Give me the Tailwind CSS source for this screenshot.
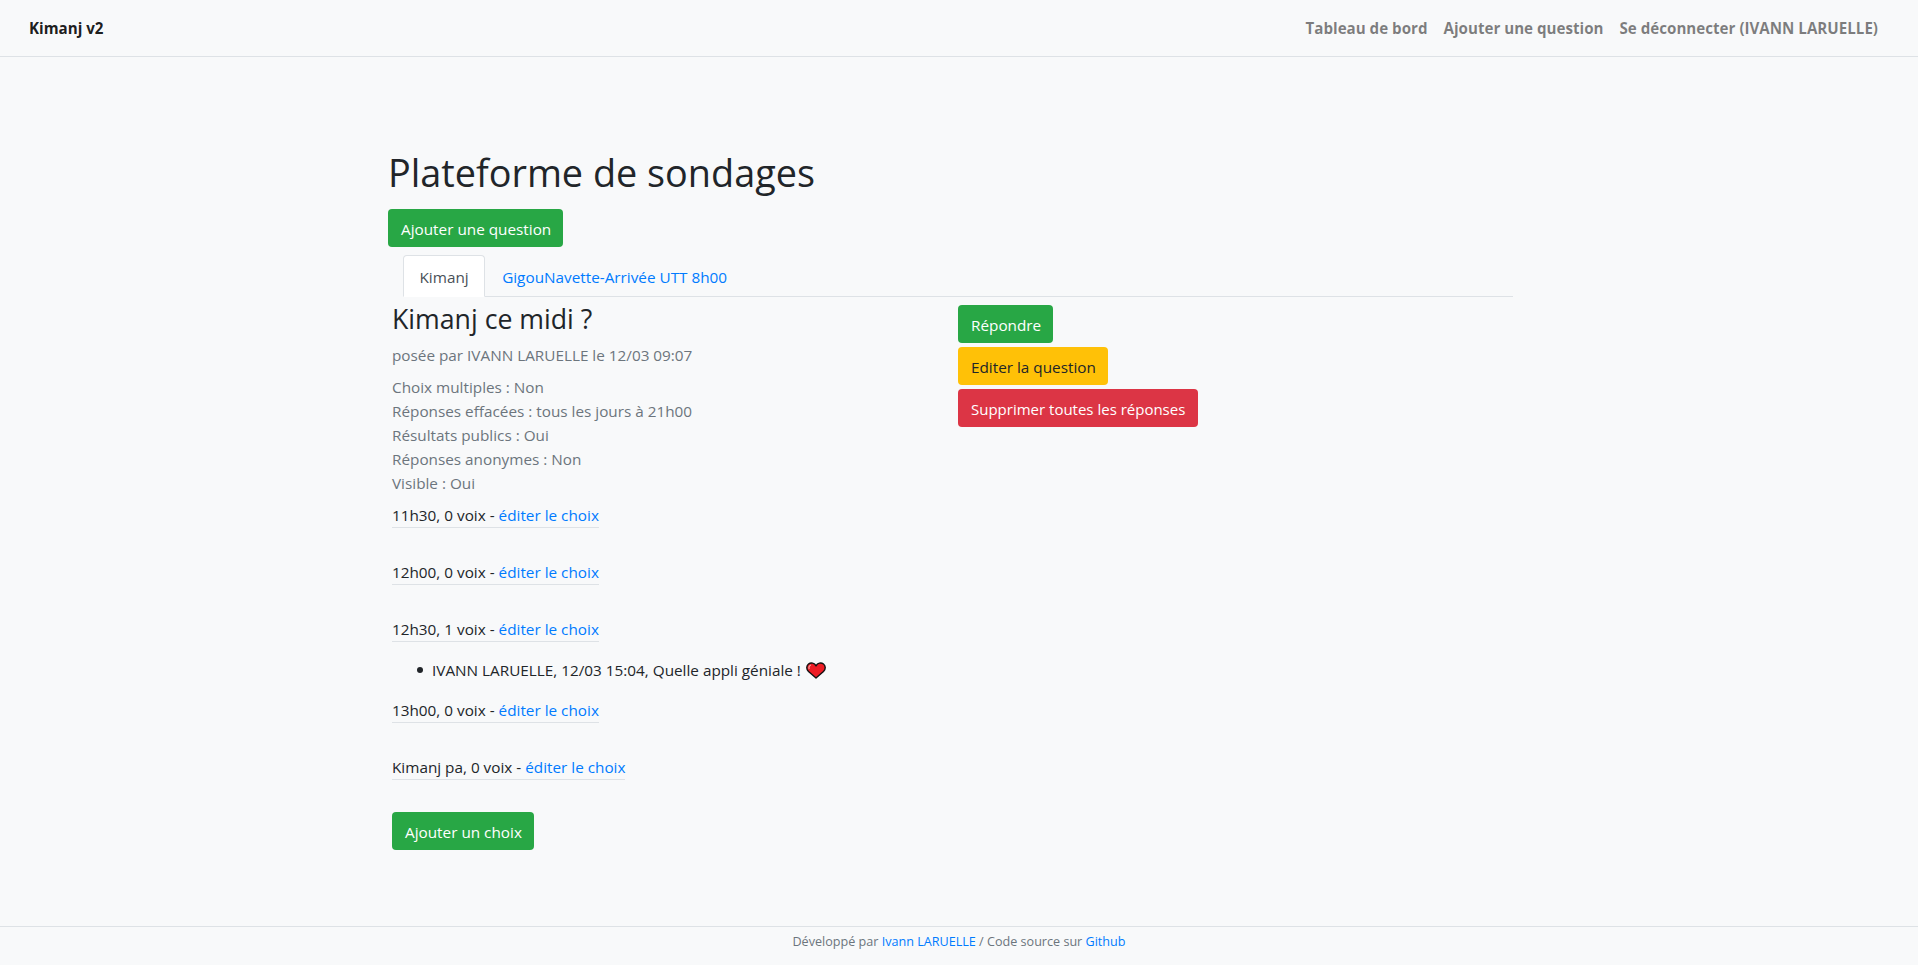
<!DOCTYPE html>
<html lang="fr">

<head>
    <meta charset="UTF-8">
    <meta name="viewport" content="width=device-width, initial-scale=1.0">
    <title>Kimanj v2</title>
    <script src="https://cdn.jsdelivr.net/npm/@tailwindcss/browser@4"></script>
</head>

<body class="bg-[#f8f9fa] text-[#212529] font-['Open_Sans',sans-serif] text-[15.3px] leading-6 min-h-screen flex flex-col">
    <nav class="h-[57px] border-b border-[#dee2e6] flex items-center justify-between pl-[29px] pr-10 font-bold text-[15.15px]">
        <a href="#" class="text-black/90">Kimanj v2</a>
        <div class="flex gap-4 text-black/50">
            <a href="#">Tableau de bord</a>
            <a href="#">Ajouter une question</a>
            <a href="#">Se déconnecter (IVANN LARUELLE)</a>
        </div>
    </nav>

    <main class="flex-1 w-[1142px] mx-auto pt-24">
        <h1 class="text-[37.8px] leading-[39px] mb-[17px]">Plateforme de sondages</h1>
        <a href="#" class="inline-block bg-[#28a745] text-white rounded pl-[13px] pr-3 pt-2 pb-[6px]">Ajouter une question</a>

        <ul class="flex mt-2 ml-[15px] mr-[17px] border-b border-[#dee2e6]">
            <li class="-mb-px"><a href="#" class="block px-[15.5px] pt-[9px] pb-[7px] text-[#495057] bg-white border border-[#dee2e6] border-b-white rounded-t">Kimanj</a></li>
            <li class="-mb-px"><a href="#" class="block px-4 pt-[9px] pb-[7px] text-[#007bff] border border-transparent">GigouNavette-Arrivée UTT 8h00</a></li>
        </ul>

        <div class="flex pl-1">
            <section class="w-[566px]">
                <h3 class="text-[26.7px] leading-[34px] mt-[5px] mb-[7px]">Kimanj ce midi ?</h3>
                <p class="text-[#6c757d] mb-2">posée par IVANN LARUELLE le 12/03 09:07</p>
                <p class="text-[#6c757d] mb-2">
                    Choix multiples : Non<br>
                    Réponses effacées : tous les jours à 21h00<br>
                    Résultats publics : Oui<br>
                    Réponses anonymes : Non<br>
                    Visible : Oui
                </p>

                <div class="mb-8"><span class="inline-block border-b border-[#dee2e6] leading-[24px]">11h30, 0 voix - <a href="#" class="text-[#007bff]">éditer le choix</a></span></div>
                <div class="mb-8"><span class="inline-block border-b border-[#dee2e6] leading-[24px]">12h00, 0 voix - <a href="#" class="text-[#007bff]">éditer le choix</a></span></div>
                <div><span class="inline-block border-b border-[#dee2e6] leading-[24px]">12h30, 1 voix - <a href="#" class="text-[#007bff]">éditer le choix</a></span></div>
                <ul class="pl-10 my-4">
                    <li class="relative before:absolute before:left-[-15px] before:top-[9px] before:size-[6px] before:rounded-full before:bg-[#212529]">
                        IVANN LARUELLE, 12/03 15:04, Quelle appli géniale !
                        <svg class="inline-block align-[-3px] ml-px" width="20" height="17" viewBox="0 0 20 17">
                            <path d="M10 16 L2.5 9.5 C0 7 0.5 3.5 2.5 2 C5 0.2 8.5 1 10 3.8 C11.5 1 15 0.2 17.5 2 C19.5 3.5 20 7 17.5 9.5 Z" fill="#ed1c24" stroke="#111" stroke-width="1.4" stroke-linejoin="round" />
                            <path d="M3.2 7 C2.4 5.2 3.4 3.4 5 3" fill="none" stroke="#f7a0a0" stroke-width="1.2" />
                        </svg>
                    </li>
                </ul>
                <div class="mb-8"><span class="inline-block border-b border-[#dee2e6] leading-[24px]">13h00, 0 voix - <a href="#" class="text-[#007bff]">éditer le choix</a></span></div>
                <div class="mb-8"><span class="inline-block border-b border-[#dee2e6] leading-[24px]">Kimanj pa, 0 voix - <a href="#" class="text-[#007bff]">éditer le choix</a></span></div>

                <a href="#" class="inline-block bg-[#28a745] text-white rounded pl-[13px] pr-3 pt-2 pb-[6px]">Ajouter un choix</a>
            </section>

            <aside class="flex flex-col items-start gap-1 pt-2">
                <a href="#" class="bg-[#28a745] text-white rounded pl-[13px] pr-3 pt-2 pb-[6px]">Répondre</a>
                <a href="#" class="bg-[#ffc107] text-[#212529] rounded pl-[13px] pr-3 pt-2 pb-[6px]">Editer la question</a>
                <a href="#" class="bg-[#dc3545] text-white rounded px-[13px] pt-2 pb-[6px] text-[15px]">Supprimer toutes les réponses</a>
            </aside>
        </div>
    </main>

    <footer class="h-[39px] border-t border-[#dee2e6] text-center text-[12.6px] leading-[30px] text-[#6c757d]">
        Développé par <a href="#" class="text-[#007bff]">Ivann LARUELLE</a> / Code source sur <a href="#" class="text-[#007bff]">Github</a>
    </footer>
</body>

</html>
